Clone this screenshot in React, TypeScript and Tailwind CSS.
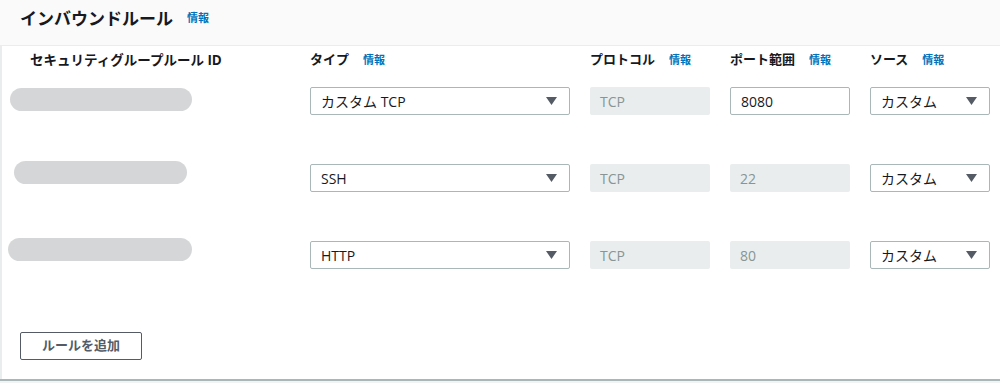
import React from "react";

const font = { fontFamily: '"Open Sans", "Noto Sans CJK JP", sans-serif' };

function Info() {
  return <span className="text-[11px] font-bold text-[#0073bb] ml-[14px]">情報</span>;
}

function Select({ value, w }: { value: string; w: string }) {
  return (
    <div className={`${w} h-[28px] border border-[#aab7b8] rounded-[2px] bg-white flex items-center justify-between pl-[10px] pr-[12px] text-[14px] text-[#16191f]`}>
      <span>{value}</span>
      <svg width="11" height="8" viewBox="0 0 11 8"><path d="M0 0 L11 0 L5.5 8 Z" fill="#545b64" /></svg>
    </div>
  );
}

function Disabled({ value }: { value: string }) {
  return (
    <div className="w-[120px] h-[28px] rounded-[2px] bg-[#eaeded] flex items-center pl-[10px] text-[14px] text-[#879596]">
      {value}
    </div>
  );
}

function Input({ value }: { value: string }) {
  return (
    <div className="w-[120px] h-[28px] border border-[#aab7b8] rounded-[2px] bg-white flex items-center pl-[10px] text-[14px] text-[#16191f]">
      {value}
    </div>
  );
}

const rows = [
  { pill: "ml-[8px] w-[182px] mt-[1px]", type: "カスタム TCP", port: "8080", editable: true },
  { pill: "ml-[12px] w-[173px] mt-[-3px]", type: "SSH", port: "22", editable: false },
  { pill: "ml-[6px] w-[184px] mt-[-3px]", type: "HTTP", port: "80", editable: false },
];

export default function App() {
  return (
    <div style={font} className="w-[1000px] h-[383px] bg-[#f2f3f3] overflow-hidden">
      <div className="h-[381px] bg-white border-b-2 border-[#aab7b8] flex flex-col">
        <div className="h-[46px] bg-[#fafafa] border-b border-[#eaeded] flex items-center pl-[20px] pb-[8px]">
          <span className="text-[17px] font-bold text-[#16191f]">インバウンドルール</span>
          <Info />
        </div>
        <div className="flex-1 border-l-2 border-[#eaeded] flex flex-col">
          <div className="flex items-center h-[28px] mt-[0px] text-[13px] font-bold text-[#16191f]">
            <div className="w-[308px] pl-[28px] text-[13.5px]">セキュリティグループルール ID</div>
            <div className="w-[280px] flex items-center">タイプ<Info /></div>
            <div className="w-[140px] flex items-center">プロトコル<Info /></div>
            <div className="w-[140px] flex items-center">ポート範囲<Info /></div>
            <div className="w-[120px] flex items-center">ソース<Info /></div>
          </div>
          <div className="flex flex-col gap-[49px] mt-[13px]">
            {rows.map((r, i) => (
              <div key={i} className="flex h-[28px]">
                <div className="w-[308px]">
                  <div className={`${r.pill} h-[23px] rounded-full bg-[#d5d6d7]`} />
                </div>
                <div className="w-[280px]"><Select value={r.type} w="w-[260px]" /></div>
                <div className="w-[140px]"><Disabled value="TCP" /></div>
                <div className="w-[140px]">{r.editable ? <Input value={r.port} /> : <Disabled value={r.port} />}</div>
                <div className="w-[120px]"><Select value="カスタム" w="w-[120px]" /></div>
              </div>
            ))}
          </div>
          <div className="mt-[63px] pl-[18px]">
            <button className="w-[122px] h-[28px] border border-[#545b64] rounded-[2px] bg-white text-[13px] font-bold text-[#545b64]">
              ルールを追加
            </button>
          </div>
        </div>
      </div>
    </div>
  );
}
